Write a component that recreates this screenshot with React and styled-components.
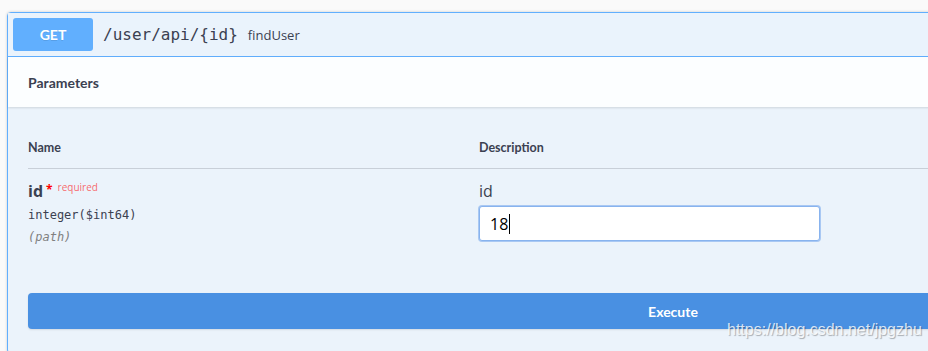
import React from 'react';
import styled, { createGlobalStyle } from 'styled-components';

const GlobalStyle = createGlobalStyle`
  html, body {
    margin: 0;
    padding: 0;
    background: #fafafa;
    overflow: hidden;
  }
  body {
    font-family: "Open Sans", sans-serif;
    color: #3b4151;
  }
`;

const Page = styled.div`
  position: relative;
  width: 928px;
  height: 351px;
  overflow: hidden;
  padding: 12px 0 0 7px;
  box-sizing: border-box;
`;

const OpBlock = styled.div`
  width: 1330px;
  border: 1px solid #61affe;
  border-radius: 4px;
  background: #ebf3fb;
  box-shadow: 0 0 3px rgba(0, 0, 0, 0.19);
`;

const Summary = styled.div`
  display: flex;
  align-items: center;
  height: 43px;
  padding: 0 5px;
  background: #eaf3fc;
  border-bottom: 1px solid #61affe;
`;

const Method = styled.span`
  display: flex;
  align-items: center;
  justify-content: center;
  width: 80px;
  height: 33px;
  border-radius: 3px;
  background: #61affe;
  color: #fff;
  font-family: Lato, sans-serif;
  font-weight: 700;
  font-size: 14px;
  text-shadow: 0 1px 0 rgba(0, 0, 0, 0.1);
`;

const Path = styled.span`
  margin-left: 10px;
  font-family: "DejaVu Sans Mono", monospace;
  font-size: 16px;
  color: #3b4151;
`;

const Description = styled.span`
  margin-left: 10px;
  font-family: "Open Sans", sans-serif;
  font-size: 13px;
  color: #3b4151;
`;

const SectionHeader = styled.div`
  display: flex;
  align-items: center;
  height: 50px;
  padding: 0 20px;
  background: rgba(255, 255, 255, 0.85);
  box-shadow: 0 1px 2px rgba(0, 0, 0, 0.12);
`;

const SectionTitle = styled.h4`
  margin: 0;
  font-family: Lato, sans-serif;
  font-size: 14px;
  font-weight: 700;
  color: #3b4151;
`;

const TableWrap = styled.div`
  padding: 20px 20px 0;
`;

const Row = styled.div`
  display: grid;
  grid-template-columns: 451px 1fr;
  align-items: start;
`;

const HeadRow = styled(Row)`
  padding: 13px 0 12px;
  border-bottom: 1px solid rgba(59, 65, 81, 0.2);
`;

const HeadCell = styled.div`
  font-family: Lato, sans-serif;
  font-size: 12.5px;
  font-weight: 700;
  line-height: 16px;
  color: #3b4151;
`;

const BodyRow = styled(Row)`
  padding: 11px 0 0;
`;

const ParamName = styled.div`
  display: flex;
  align-items: flex-start;
  font-family: "Open Sans", sans-serif;
  font-size: 16px;
  font-weight: 700;
  line-height: 22px;
  color: #3b4151;
`;

const Star = styled.span`
  color: red;
  font-size: 12px;
  margin-left: 3px;
  line-height: 20px;
`;

const Required = styled.span`
  margin-left: 5px;
  font-size: 10px;
  font-weight: 400;
  line-height: 14px;
  color: rgba(255, 0, 0, 0.6);
  font-family: "Open Sans", sans-serif;
`;

const Mono = styled.div`
  margin-top: ${p => p.$gap || 0}px;
  font-family: "DejaVu Sans Mono", monospace;
  font-size: 12px;
  line-height: 15px;
  color: ${p => (p.$muted ? '#808080' : '#3b4151')};
  font-style: ${p => (p.$muted ? 'italic' : 'normal')};
`;

const DescText = styled.div`
  font-family: "Open Sans", sans-serif;
  font-size: 16px;
  line-height: 22px;
  color: #3b4151;
`;

const Field = styled.div`
  display: flex;
  align-items: center;
  box-sizing: border-box;
  width: 341px;
  height: 35px;
  margin-top: 4px;
  padding: 0 10px;
  border: 1px solid #88b3ee;
  box-shadow: 0 0 0 1px #a9c8f3;
  border-radius: 3px;
  background: #fff;
  font-family: "Open Sans", sans-serif;
  font-size: 16px;
  color: #000;
`;

const Caret = styled.span`
  display: inline-block;
  width: 1px;
  height: 20px;
  margin-left: 1px;
  background: #000;
`;

const ExecuteWrap = styled.div`
  padding: 48px 20px 24px;
`;

const ExecuteButton = styled.button`
  display: block;
  width: 100%;
  height: 36px;
  border: none;
  border-radius: 4px;
  background: #4990e2;
  color: #fff;
  font-family: Lato, sans-serif;
  font-size: 14px;
  font-weight: 700;
  box-shadow: 0 1px 2px rgba(0, 0, 0, 0.1);
`;

const Watermark = styled.div`
  position: absolute;
  left: 727px;
  top: 321px;
  font-family: "Liberation Sans", Arial, sans-serif;
  font-size: 16px;
  color: rgba(255, 255, 255, 0.8);
  text-shadow: 1px 1px 1px rgba(0, 0, 0, 0.3);
  white-space: nowrap;
`;

export default function App() {
  return (
    <>
      <GlobalStyle />
      <Page>
        <OpBlock>
          <Summary>
            <Method>GET</Method>
            <Path>/user/api/{'{id}'}</Path>
            <Description>findUser</Description>
          </Summary>
          <SectionHeader>
            <SectionTitle>Parameters</SectionTitle>
          </SectionHeader>
          <TableWrap>
            <HeadRow>
              <HeadCell>Name</HeadCell>
              <HeadCell>Description</HeadCell>
            </HeadRow>
            <BodyRow>
              <div>
                <ParamName>
                  id<Star>*</Star>
                  <Required>required</Required>
                </ParamName>
                <Mono $gap={6}>integer($int64)</Mono>
                <Mono $gap={7} $muted>(path)</Mono>
              </div>
              <div>
                <DescText>id</DescText>
                <Field>
                  18<Caret />
                </Field>
              </div>
            </BodyRow>
          </TableWrap>
          <ExecuteWrap>
            <ExecuteButton>Execute</ExecuteButton>
          </ExecuteWrap>
        </OpBlock>
        <Watermark>https://blog.csdn.net/jpgzhu</Watermark>
      </Page>
    </>
  );
}
